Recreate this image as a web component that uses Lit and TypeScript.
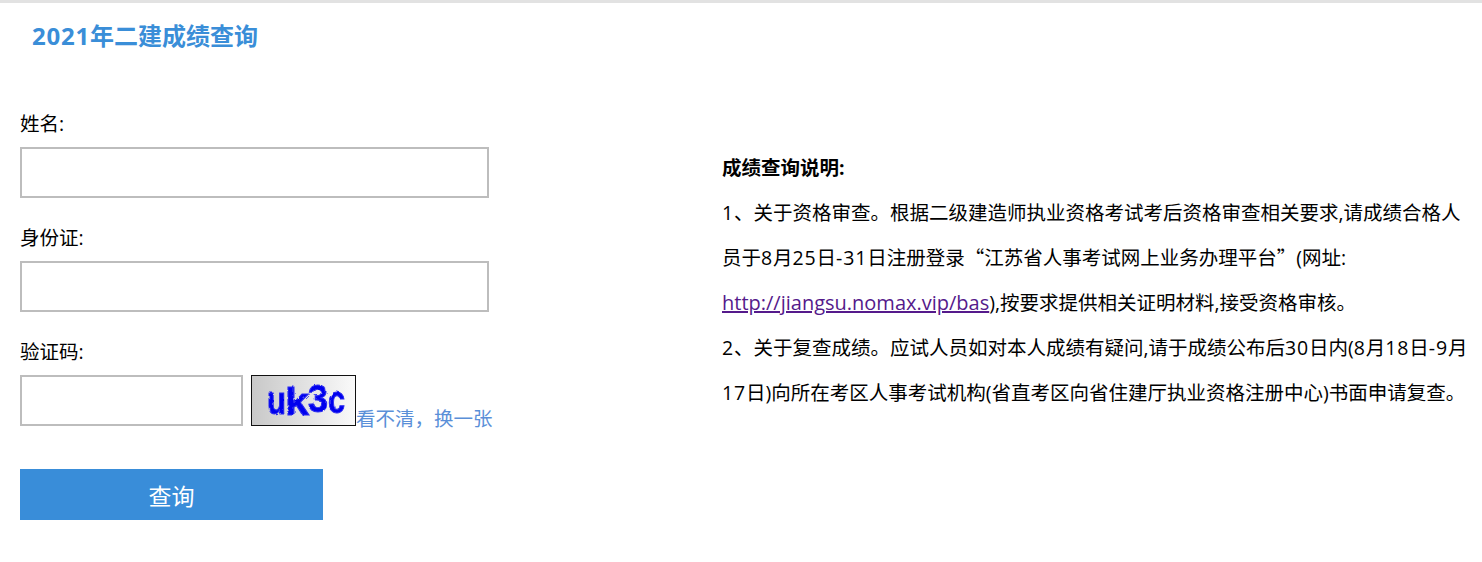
import { LitElement, html, css, svg } from 'lit';
import { customElement } from 'lit/decorators.js';

// x, baseline and width of each letter in the captcha picture
const CAPTCHA = [
  { ch: 'u', x: 16, y: 39, w: 19 },
  { ch: 'k', x: 34, y: 40, w: 24 },
  { ch: '3', x: 57, y: 37, w: 20 },
  { ch: 'c', x: 77, y: 38, w: 17 },
];

// digits run a little wider than the fallback latin face
const n = (text: string) => html`<span class="n">${text}</span>`;

@customElement('app-root')
export class AppRoot extends LitElement {
  static styles = css`
    :host {
      display: block;
      height: 562px;
      box-sizing: border-box;
      overflow: hidden;
      border-top: 3px solid #e2e2e2;
      background: #fff;
      color: #000;
      font-family: 'Open Sans', 'Noto Sans CJK SC', sans-serif;
      font-size: 19.5px;
    }
    .title {
      margin: 0;
      padding: 16px 0 0 32px;
      height: 34px;
      line-height: 34px;
      font-size: 24px;
      font-weight: 700;
      color: #3a8ed8;
    }
    .year {
      letter-spacing: 0.75px;
    }
    .main {
      display: flex;
      padding-top: 58px;
    }
    .form {
      width: 702px;
      margin-left: 20px;
      flex: none;
    }
    .field {
      margin-bottom: 27px;
    }
    .field label {
      display: block;
      height: 26px;
      line-height: 26px;
      margin-bottom: 10px;
    }
    .input {
      display: block;
      box-sizing: border-box;
      width: 469px;
      height: 51px;
      border: 2px solid #bdbdbd;
      background: #fff;
      padding: 0 8px;
      font: inherit;
      outline: none;
    }
    .captcha-row {
      display: flex;
      align-items: flex-end;
    }
    .captcha-row .input {
      width: 223px;
      margin-right: 8px;
    }
    .captcha {
      display: block;
      width: 105px;
      height: 51px;
      flex: none;
    }
    .captcha text {
      font-family: 'Liberation Sans', sans-serif;
      font-size: 38px;
      font-weight: 700;
      fill: #0000ee;
      stroke: #2a2af0;
      stroke-width: 1px;
    }
    .refresh {
      color: #5a8fd8;
      text-decoration: none;
      line-height: 24px;
      margin-bottom: -5px;
    }
    .submit {
      display: block;
      width: 303px;
      height: 51px;
      border: 0;
      margin-top: 43px;
      background: #398dd9;
      color: #fff;
      font: inherit;
      font-size: 23px;
    }
    .notes {
      width: 752px;
      margin-top: 34px;
      line-height: 45px;
    }
    .notes p {
      margin: 0;
    }
    .notes a {
      color: #551a8b;
      font-size: 20px;
      line-height: 1;
    }
    .quote {
      font-family: 'Noto Sans CJK SC', sans-serif;
      line-height: 1;
    }
    .n {
      letter-spacing: 0.85px;
    }
  `;

  render() {
    return html`
      <h1 class="title"><span class="year">2021</span>年二建成绩查询</h1>
      <div class="main">
        <form class="form" @submit=${(e: Event) => e.preventDefault()}>
          <div class="field">
            <label>姓名:</label>
            <input class="input" type="text" />
          </div>
          <div class="field">
            <label>身份证:</label>
            <input class="input" type="text" />
          </div>
          <div class="field">
            <label>验证码:</label>
            <div class="captcha-row">
              <input class="input" type="text" />
              <svg class="captcha" viewBox="0 0 105 51">
                <defs>
                  <linearGradient id="captcha-bg">
                    <stop offset="0" stop-color="#c8c8c8" />
                    <stop offset="1" stop-color="#fafafa" />
                  </linearGradient>
                  <filter id="captcha-noise" x="-10%" y="-10%" width="120%" height="120%">
                    <feTurbulence type="fractalNoise" baseFrequency="0.18" numOctaves="2" seed="4" result="noise" />
                    <feDisplacementMap in="SourceGraphic" in2="noise" scale="3" />
                    <feGaussianBlur stdDeviation="0.35" />
                  </filter>
                </defs>
                <rect x="0.5" y="0.5" width="104" height="50" fill="url(#captcha-bg)" stroke="#111" />
                <g filter="url(#captcha-noise)">
                  ${CAPTCHA.map(
                    (l) => svg`<text x=${l.x} y=${l.y} textLength=${l.w} lengthAdjust="spacingAndGlyphs">${l.ch}</text>`
                  )}
                </g>
              </svg>
              <a class="refresh" href="#">看不清${'\uFF0C'}换一张</a>
            </div>
          </div>
          <button class="submit" type="submit">查询</button>
        </form>
        <div class="notes" lang="zh-Hans">
          <p><b>成绩查询说明:</b></p>
          <p>${n('1')}、关于资格审查。根据二级建造师执业资格考试考后资格审查相关要求,请成绩合格人员于${n('8')}月${n('25')}日${n('-31')}日注册登录<span class="quote">“</span>江苏省人事考试网上业务办理平台<span class="quote">”</span>(网址: <a href="#">http://jiangsu.nomax.vip/bas</a>),按要求提供相关证明材料,接受资格审核。</p>
          <p>${n('2')}、关于复查成绩。应试人员如对本人成绩有疑问,请于成绩公布后${n('30')}日内(${n('8')}月${n('18')}日${n('-9')}月${n('17')}日)向所在考区人事考试机构(省直考区向省住建厅执业资格注册中心)书面申请复查。</p>
        </div>
      </div>
    `;
  }
}
